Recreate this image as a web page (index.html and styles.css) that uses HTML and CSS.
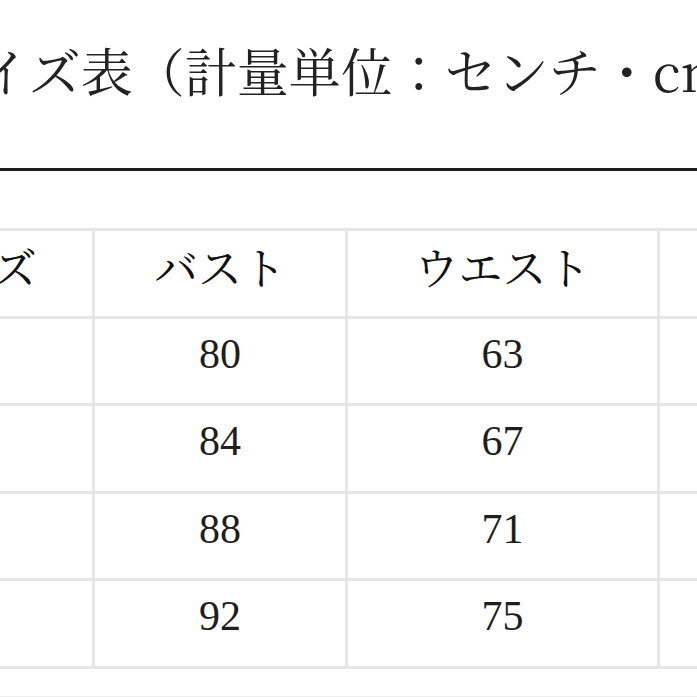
FILE: index.html
```html
<!DOCTYPE html>
<html lang="ja">
<head>
<meta charset="utf-8">
<link rel="stylesheet" href="styles.css">
</head>
<body>
<div class="page">
  <h1 class="title">サイズ表（計量単位：センチ・cm）</h1>
  <div class="rule"></div>
  <table class="size-table">
    <colgroup>
      <col class="c1"><col class="c2"><col class="c3"><col class="c4">
    </colgroup>
    <thead>
      <tr><th>サイズ</th><th>バスト</th><th>ウエスト</th><th>ヒップ</th></tr>
    </thead>
    <tbody>
      <tr><td>S</td><td>80</td><td>63</td><td>88</td></tr>
      <tr><td>M</td><td>84</td><td>67</td><td>92</td></tr>
      <tr><td>L</td><td>88</td><td>71</td><td>96</td></tr>
      <tr><td>XL</td><td>92</td><td>75</td><td>100</td></tr>
    </tbody>
  </table>
  <div class="edge"></div>
</div>
</body>
</html>
```
FILE: styles.css
```css
html, body {
  margin: 0;
  padding: 0;
  background: #ffffff;
  overflow: hidden;
}
.page {
  width: 697px;
  height: 697px;
  overflow: hidden;
  font-family: "Liberation Serif", "Noto Serif CJK JP", "Noto Sans CJK JP", serif;
  color: #1a1a1a;
}
.title {
  margin: 0 0 0 -71px;
  padding-top: 40px;
  font-family: "Noto Serif CJK JP", "Noto Sans CJK JP", serif;
  font-size: 52px;
  line-height: 60px;
  font-weight: 400;
  white-space: nowrap;
  color: #222;
}
.rule {
  margin-top: 68px;
  height: 3px;
  background: #1c1c1c;
  width: 697px;
}
.size-table {
  margin-top: 57px;
  margin-left: -150px;
  width: 1057px;
  border-collapse: collapse;
  table-layout: fixed;
}
.c1 { width: 242px; }
.c2 { width: 253px; }
.c3 { width: 312px; }
.c4 { width: 250px; }
.size-table th,
.size-table td {
  border: 3px solid #e6e6e6;
  height: 70.5px;
  padding: 0 0 14px 0;
  text-align: center;
  vertical-align: middle;
  font-weight: 400;
  white-space: nowrap;
}
.size-table th {
  font-size: 44px;
  font-family: "Noto Serif CJK JP", "Noto Sans CJK JP", serif;
  color: #111;
}
.size-table td {
  font-size: 42px;
  color: #1e1e1e;
}
.edge {
  margin-top: 27px;
  height: 1px;
  background: #efefef;
  width: 697px;
}
```
